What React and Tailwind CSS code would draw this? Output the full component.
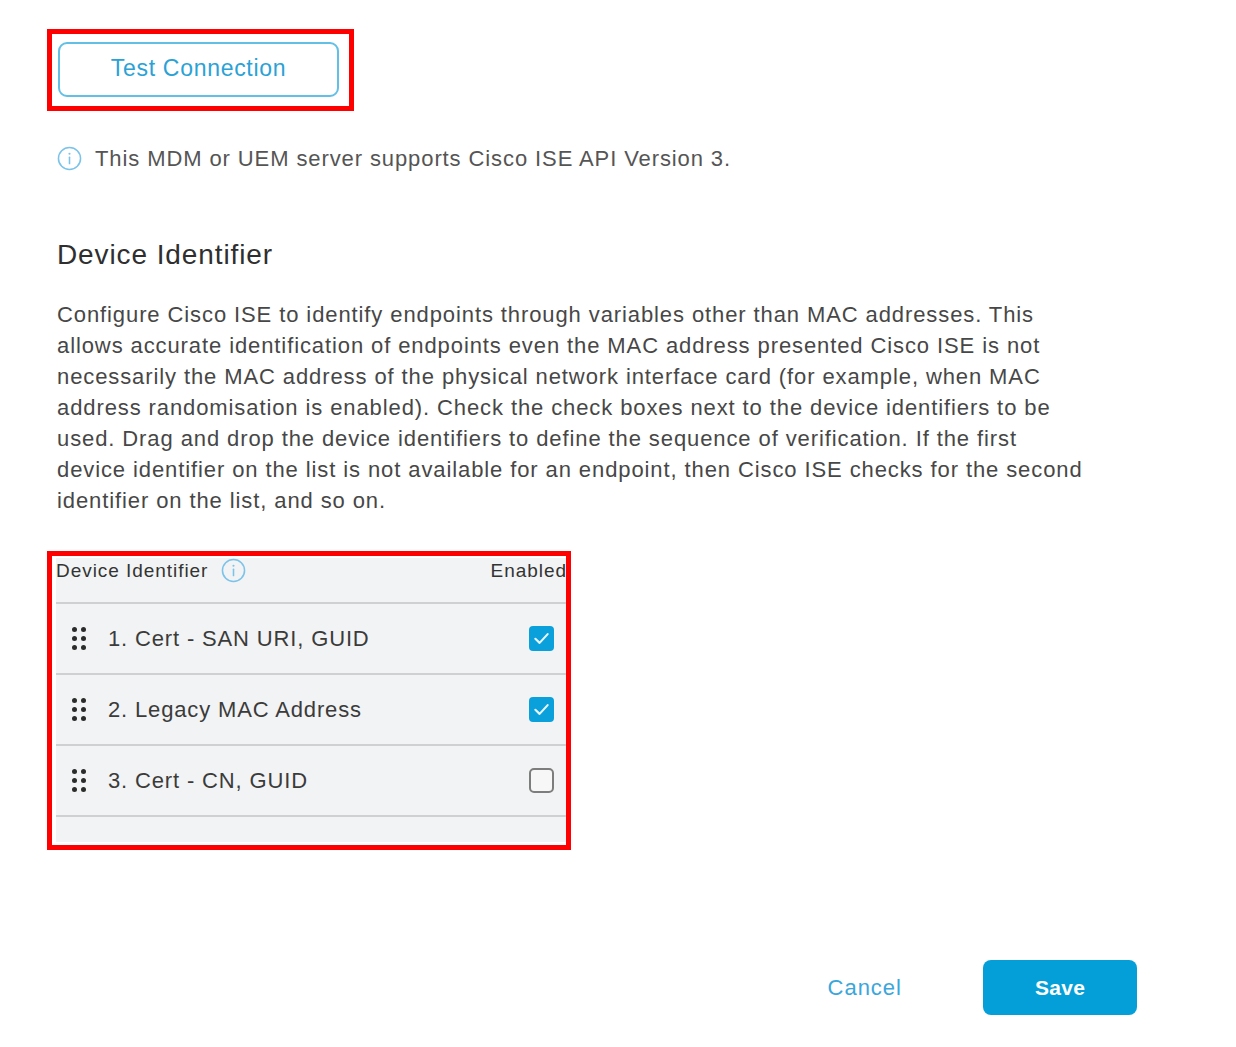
import React from "react";

const FONT = { fontFamily: '"Liberation Sans", Arial, Helvetica, sans-serif' };

function InfoIcon({ size = 25, className = "" }) {
  return (
    <svg width={size} height={size} viewBox="0 0 26 26" className={className}>
      <circle cx="13" cy="13" r="11.5" fill="none" stroke="#7cc3ea" strokeWidth="1.6" />
      <circle cx="13" cy="8" r="1.1" fill="#7cc3ea" />
      <rect x="12.2" y="11" width="1.6" height="8" rx="0.6" fill="#7cc3ea" />
    </svg>
  );
}

function DragHandle() {
  return (
    <div className="grid grid-cols-2 gap-x-[4px] gap-y-[4px] w-[14px]">
      {[0, 1, 2, 3, 4, 5].map((i) => (
        <span key={i} className="block w-[5px] h-[5px] rounded-full bg-[#2b2b2b]" />
      ))}
    </div>
  );
}

function Checkbox({ checked }) {
  if (checked) {
    return (
      <div className="w-[25px] h-[25px] rounded-[4px] bg-[#0aa0dc] flex items-center justify-center">
        <svg width="19" height="19" viewBox="0 0 17 17">
          <path d="M3 8.8 L6.8 12.4 L14 4.6" fill="none" stroke="#e8f6fc" strokeWidth="1.9" strokeLinecap="round" strokeLinejoin="round" />
        </svg>
      </div>
    );
  }
  return <div className="w-[25px] h-[25px] rounded-[5px] border-2 border-[#7d7d7d] bg-[#f7f7f7]" />;
}

const rows = [
  { label: "1. Cert - SAN URI, GUID", checked: true },
  { label: "2. Legacy MAC Address", checked: true },
  { label: "3. Cert - CN, GUID", checked: false },
];

const para = [
  "Configure Cisco ISE to identify endpoints through variables other than MAC addresses. This",
  "allows accurate identification of endpoints even the MAC address presented Cisco ISE is not",
  "necessarily the MAC address of the physical network interface card (for example, when MAC",
  "address randomisation is enabled). Check the check boxes next to the device identifiers to be",
  "used. Drag and drop the device identifiers to define the sequence of verification. If the first",
  "device identifier on the list is not available for an endpoint, then Cisco ISE checks for the second",
  "identifier on the list, and so on.",
];

export default function App() {
  return (
    <div className="w-[1236px] h-[1047px] bg-white overflow-hidden relative" style={FONT}>
      <div className="flex flex-col pl-[47px] pt-[29px]">
        {/* Test connection */}
        <div className="w-[307px] h-[82px] border-[5px] border-[#ff0000] pt-[8px] pl-[6px]">
          <button className="w-[281px] h-[55px] rounded-[9px] border-2 border-[#62bfe6] bg-white text-[#2aa2d6] text-[23px] tracking-[0.7px] flex items-center justify-center pb-[3px]">
            Test Connection
          </button>
        </div>

        {/* info */}
        <div className="flex items-center ml-[10px] mt-[35px] h-[25px]">
          <InfoIcon size={25} />
          <span className="ml-[13px] text-[22px] text-[#555] tracking-[0.9px]">
            This MDM or UEM server supports Cisco ISE API Version 3.
          </span>
        </div>

        {/* heading */}
        <h2 className="ml-[10px] mt-[68px] text-[28px] leading-[32px] text-[#2f2f2f] tracking-[0.9px]">
          Device Identifier
        </h2>

        {/* paragraph */}
        <div className="ml-[10px] mt-[28px] text-[22px] leading-[31px] text-[#474747] tracking-[0.9px]">
          {para.map((l, i) => (
            <div key={i} className="whitespace-nowrap">{l}</div>
          ))}
        </div>

        {/* table */}
        <div className="mt-[35px] w-[524px] h-[299px] border-[5px] border-[#ff0000] pt-[2px] pl-[4px] pb-[3px] bg-white">
          <div className="w-[510px] h-full bg-[#f2f3f4] overflow-hidden flex flex-col">
            <div className="h-[46px] shrink-0 flex items-start justify-between border-b-2 border-[#cfd0d1]">
              <div className="flex items-center h-[25px]">
                <span className="text-[19px] leading-[25px] text-[#333] tracking-[0.95px]">Device Identifier</span>
                <InfoIcon size={25} className="ml-[13px]" />
              </div>
              <span className="text-[19px] leading-[25px] text-[#333] tracking-[0.95px] mr-[-1px]">Enabled</span>
            </div>
            {rows.map((r, i) => (
              <div key={i} className="h-[71px] flex items-center border-b-2 border-[#cfd0d1] shrink-0">
                <div className="ml-[16px]">
                  <DragHandle />
                </div>
                <span className="ml-[22px] text-[22px] text-[#3b3b3b] tracking-[0.85px] flex-1">{r.label}</span>
                <div className="mr-[12px]">
                  <Checkbox checked={r.checked} />
                </div>
              </div>
            ))}
          </div>
        </div>
      </div>

      {/* footer buttons */}
      <div className="absolute left-0 right-0 top-[960px] flex items-center justify-end pr-[99px]">
        <button className="text-[22px] text-[#3aa6dc] tracking-[1px] bg-transparent">Cancel</button>
        <button className="ml-[81px] w-[154px] h-[55px] rounded-[8px] bg-[#049fd9] text-white text-[21px] font-bold tracking-[0.3px]">
          Save
        </button>
      </div>
    </div>
  );
}
